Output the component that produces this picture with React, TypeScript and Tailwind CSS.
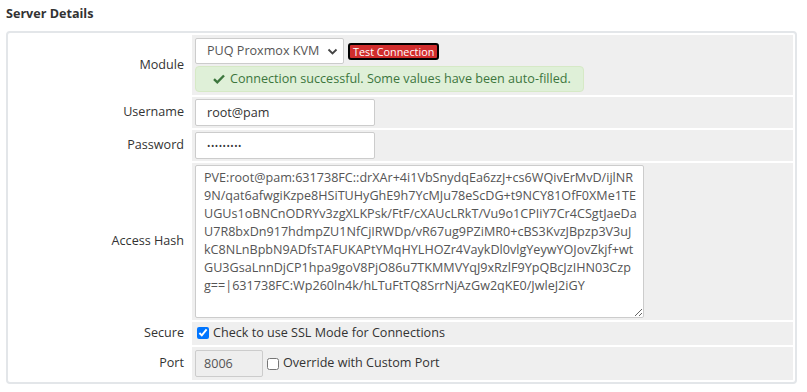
import React from "react";

const HASH =
  "PVE:root@pam:631738FC::drXAr+4i1VbSnydqEa6zzJ+cs6WQivErMvD/ijlNR9N/qat6afwgiKzpe8HSiTUHyGhE9h7YcMJu78eScDG+t9NCY81OfF0XMe1TEUGUs1oBNCnODRYv3zgXLKPsk/FtF/cXAUcLRkT/Vu9o1CPIiY7Cr4CSgtJaeDaU7R8bxDn917hdmpZU1NfCjIRWDp/vR67ug9PZiMR0+cBS3KvzJBpzp3V3uJkC8NLnBpbN9ADfsTAFUKAPtYMqHYLHOZr4VaykDl0vlgYeywYOJovZkjf+wtGU3GsaLnnDjCP1hpa9goV8PjO86u7TKMMVYqJ9xRzlF9YpQBcJzIHN03Czpg==|631738FC:Wp260ln4k/hLTuFtTQ8SrrNjAzGw2qKE0/JwleJ2iGY";

function Label({ children }: { children: React.ReactNode }) {
  return (
    <td className="w-[180px] bg-white text-right pr-[6px] align-middle text-[12.6px] text-[#333] p-0">
      {children}
    </td>
  );
}

export default function App() {
  return (
    <div
      className="w-[807px] h-[392px] bg-white text-[#333] overflow-hidden"
      style={{ fontFamily: '"Open Sans", "Liberation Sans", sans-serif' }}
    >
      <div className="px-[6px] pt-[3px]">
        <h2 className="text-[12.6px] font-bold text-[#333] leading-[18px] h-[28px] pt-[2px]">
          Server Details
        </h2>
        <div className="border-2 border-[#e3e6e9] rounded-[4px] w-[791px]">
          <table className="w-full border-separate border-spacing-[2px]">
            <tbody>
              <tr>
                <Label>Module</Label>
                <td className="bg-[#efefef] px-[3px] pt-[3px] pb-[3px]">
                  <div className="flex items-center gap-[4px] h-[26px]">
                    <div className="relative w-[149px] h-[26px] bg-white border border-[#ccc] rounded-[2px] flex items-center pl-[11px] text-[12.6px] text-[#555]">
                      PUQ Proxmox KVM
                      <svg
                        className="absolute right-[5px] top-[9px]"
                        width="11"
                        height="8"
                        viewBox="0 0 11 8"
                      >
                        <path d="M1.5 1.5 L5.5 5.5 L9.5 1.5" stroke="#444" strokeWidth="1.8" fill="none" />
                      </svg>
                    </div>
                    <button className="h-[17px] bg-[#d12d2d] border-2 border-black rounded-[3px] text-white text-[10.8px] leading-[12px] px-[3px] mt-[1px]">
                      Test Connection
                    </button>
                  </div>
                  <div className="mt-[2px] w-[389px] h-[26px] bg-[#dff0d8] border border-[#d6e9c6] rounded-[4px] flex items-center pl-[17px] text-[12.6px] text-[#3c763d]">
                    <svg width="12" height="10" viewBox="0 0 12 10" className="mr-[5px]">
                      <path d="M1 5.2 L4.3 8.3 L11 1.5" stroke="#3c763d" strokeWidth="2.4" fill="none" />
                    </svg>
                    Connection successful. Some values have been auto-filled.
                  </div>
                </td>
              </tr>
              <tr>
                <Label>Username</Label>
                <td className="bg-[#efefef] px-[3px] py-[2px]">
                  <input
                    readOnly
                    value="root@pam"
                    className="block w-[180px] h-[27px] bg-white border border-[#ccc] rounded-[2px] px-[11px] text-[12.6px] text-[#333] outline-none"
                  />
                </td>
              </tr>
              <tr>
                <Label>Password</Label>
                <td className="bg-[#efefef] px-[3px] py-[2px]">
                  <input
                    readOnly
                    type="password"
                    value="aaaaaaaaa"
                    className="block w-[180px] h-[27px] bg-white border border-[#ccc] rounded-[2px] px-[11px] text-[9px] tracking-[0.5px] text-[#333] outline-none"
                  />
                </td>
              </tr>
              <tr>
                <Label>Access Hash</Label>
                <td className="bg-[#efefef] px-[3px] pt-[2px] pb-[2px]">
                  <textarea
                    readOnly
                    value={HASH}
                    className="block w-[449px] h-[153px] bg-white border border-[#ccc] rounded-[2px] pl-[8px] pr-[6px] pt-[3px] text-[12.6px] leading-[18px] text-[#555] outline-none break-all resize-y"
                  />
                </td>
              </tr>
              <tr>
                <Label>Secure</Label>
                <td className="bg-[#efefef] px-[3px] h-[23px]">
                  <label className="flex items-center text-[12.6px] text-[#333]">
                    <input
                      type="checkbox"
                      defaultChecked
                      className="w-[12px] h-[12px] ml-[2px] mr-[4px]"
                    />
                    Check to use SSL Mode for Connections
                  </label>
                </td>
              </tr>
              <tr>
                <Label>Port</Label>
                <td className="bg-[#efefef] px-[3px] py-[3px]">
                  <div className="flex items-center text-[12.6px] text-[#333]">
                    <input
                      readOnly
                      value="8006"
                      className="w-[68px] h-[27px] bg-[#eeeeee] border border-[#ccc] rounded-[2px] px-[8px] text-[12.6px] text-[#555] outline-none"
                    />
                    <input type="checkbox" className="w-[12px] h-[12px] ml-[4px] mr-[4px]" />
                    Override with Custom Port
                  </div>
                </td>
              </tr>
            </tbody>
          </table>
        </div>
      </div>
    </div>
  );
}
